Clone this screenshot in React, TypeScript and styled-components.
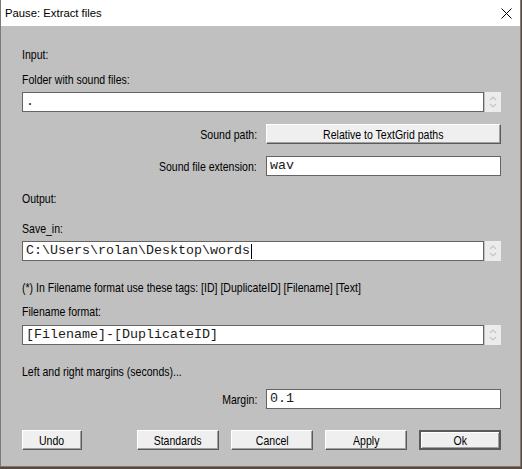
import React from "react";
import styled, { createGlobalStyle } from "styled-components";

const Global = createGlobalStyle`
  html, body { margin: 0; padding: 0; background: #5b4a3c; }
  body { width: 522px; height: 469px; overflow: hidden; }
`;

const Window = styled.div`
  width: 519px;
  height: 466px;
  background: #c0c0c0;
  border: 1px solid #7a7a7a;
  border-top: none;
  display: flex;
  flex-direction: column;
  font-family: "Liberation Sans", Arial, sans-serif;
  font-size: 13px;
  color: #000;
`;

const TitleBar = styled.div`
  height: 26px;
  flex: none;
  background: #fff;
  display: flex;
  align-items: center;
  justify-content: space-between;
  padding-left: 4px;
  font-family: "Liberation Sans", Arial, sans-serif;
  font-size: 11.3px;
`;

const CloseBox = styled.div`
  width: 28px;
  height: 26px;
  display: flex;
  align-items: center;
  justify-content: center;
`;

const Body = styled.div`
  display: flex;
  flex-direction: column;
  padding: 0 19px 0 21px;
`;

/* The dialog font is a narrow sans; compress Liberation Sans horizontally. */
const Narrow = styled.span<{ $origin?: string }>`
  display: inline-block;
  transform: scaleX(0.81);
  transform-origin: ${(p) => p.$origin ?? "left"} center;
  white-space: nowrap;
`;

const Label = styled.div<{ $top: number }>`
  margin-top: ${(p) => p.$top}px;
  height: 14px;
  line-height: 14px;
  white-space: nowrap;
`;

const FieldRow = styled.div<{ $top: number }>`
  margin-top: ${(p) => p.$top}px;
  display: flex;
  height: 20px;
`;

const TextBox = styled.div`
  flex: 1;
  box-sizing: border-box;
  height: 20px;
  background: #fff;
  border: 1px solid #646464;
  font-family: "Liberation Mono", "Courier New", monospace;
  font-size: 13.33px;
  line-height: 18px;
  padding-left: 3px;
  color: #1a1a1a;
  white-space: nowrap;
  overflow: hidden;
  display: flex;
  align-items: center;
`;

const Caret = styled.span`
  display: inline-block;
  width: 1px;
  height: 15px;
  background: #000;
  margin-left: 1px;
`;

const Spinner = styled.div`
  width: 16px;
  height: 20px;
  margin-left: 1px;
  background: #ececec;
  display: flex;
  align-items: center;
  justify-content: center;
`;

const LabeledRow = styled.div<{ $top: number }>`
  margin-top: ${(p) => p.$top}px;
  display: flex;
  align-items: center;
  height: 20px;
`;

const RowLabel = styled.div`
  width: 235px;
  text-align: right;
  padding-right: 9px;
  white-space: nowrap;
`;

const Button = styled.div<{ $default?: boolean; $w: number }>`
  box-sizing: border-box;
  width: ${(p) => p.$w}px;
  height: 20px;
  background: #efefef;
  border-style: solid;
  border-width: 1px;
  border-color: ${(p) => (p.$default ? "#5a5a5a" : "#ffffff #5a5a5a #5a5a5a #ffffff")};
  box-shadow: ${(p) =>
    p.$default
      ? "inset 0 0 0 1px #5a5a5a, inset 1px 1px 0 1px #fff, inset -1px -1px 0 1px #a0a0a0"
      : "inset -1px -1px 0 #a0a0a0"};
  display: flex;
  align-items: center;
  justify-content: center;
  white-space: nowrap;
`;

const WideButton = styled(Button)`
  flex: 1;
`;

const ButtonBar = styled.div`
  margin-top: 21px;
  display: flex;
  align-items: center;
`;

const ButtonGroup = styled.div`
  margin-left: auto;
  display: flex;
  gap: 12px;
`;

const SpinIcon = () => (
  <svg width="10" height="16" viewBox="0 0 10 16" fill="none" stroke="#c4c4c4" strokeWidth="1.2">
    <path d="M2 6 L5 3 L8 6" />
    <path d="M2 10 L5 13 L8 10" />
  </svg>
);

const Field = ({ top, value, caret }: { top: number; value: string; caret?: boolean }) => (
  <FieldRow $top={top}>
    <TextBox>
      {value}
      {caret && <Caret />}
    </TextBox>
    <Spinner>
      <SpinIcon />
    </Spinner>
  </FieldRow>
);

const Txt = ({ children }: { children: React.ReactNode }) => <Narrow>{children}</Narrow>;

export default function App() {
  return (
    <>
      <Global />
      <Window>
        <TitleBar>
          <span>Pause: Extract files</span>
          <CloseBox>
            <svg width="11" height="11" viewBox="0 0 11 11" stroke="#000" strokeWidth="1">
              <path d="M0.5 0.5 L10.5 10.5 M10.5 0.5 L0.5 10.5" />
            </svg>
          </CloseBox>
        </TitleBar>
        <Body>
          <Label $top={22}><Txt>Input:</Txt></Label>
          <Label $top={11}><Txt>Folder with sound files:</Txt></Label>
          <Field top={5} value="." />
          <LabeledRow $top={12}>
            <RowLabel><Narrow $origin="right">Sound path:</Narrow></RowLabel>
            <WideButton $w={0}><Narrow $origin="center">Relative to TextGrid paths</Narrow></WideButton>
          </LabeledRow>
          <LabeledRow $top={12}>
            <RowLabel><Narrow $origin="right">Sound file extension:</Narrow></RowLabel>
            <TextBox>wav</TextBox>
          </LabeledRow>
          <Label $top={16}><Txt>Output:</Txt></Label>
          <Label $top={16}><Txt>Save_in:</Txt></Label>
          <Field top={5} value="C:\Users\rolan\Desktop\words" caret />
          <Label $top={20}><Txt>(*) In Filename format use these tags: [ID] [DuplicateID] [Filename] [Text]</Txt></Label>
          <Label $top={10}><Txt>Filename format:</Txt></Label>
          <Field top={6} value="[Filename]-[DuplicateID]" />
          <Label $top={20}><Txt>Left and right margins (seconds)...</Txt></Label>
          <LabeledRow $top={10}>
            <RowLabel><Narrow $origin="right">Margin:</Narrow></RowLabel>
            <TextBox>0.1</TextBox>
          </LabeledRow>
          <ButtonBar>
            <Button $w={60}><Narrow $origin="center">Undo</Narrow></Button>
            <ButtonGroup>
              <Button $w={82}><Narrow $origin="center">Standards</Narrow></Button>
              <Button $w={82}><Narrow $origin="center">Cancel</Narrow></Button>
              <Button $w={82}><Narrow $origin="center">Apply</Narrow></Button>
              <Button $w={82} $default>
                <Narrow $origin="center">Ok</Narrow>
              </Button>
            </ButtonGroup>
          </ButtonBar>
        </Body>
      </Window>
    </>
  );
}
